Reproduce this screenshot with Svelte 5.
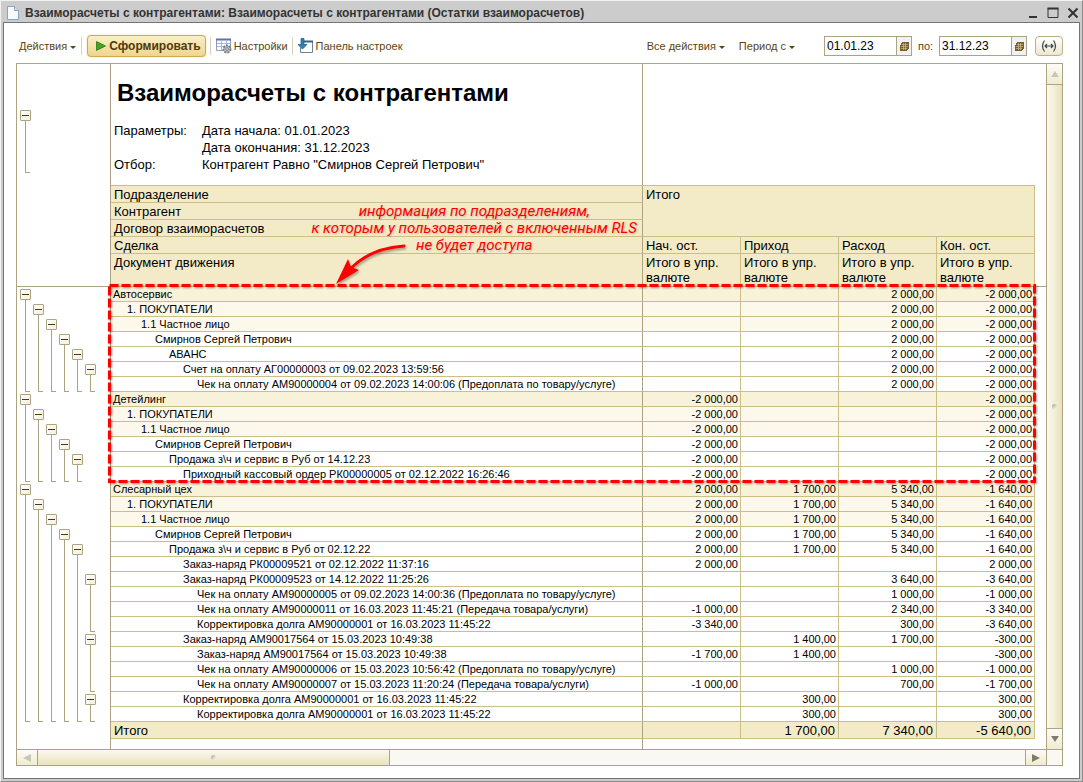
<script lang="ts">
  interface Row {
    readonly level: number;
    readonly title: string;
    readonly sums: readonly string[];
  }

  const row = (level: number, title: string, ...sums: string[]): Row => ({ level, title, sums });

  const advance = ["", "", "2 000,00", "-2 000,00"];
  const debt = ["-2 000,00", "", "", "-2 000,00"];
  const shop = ["2 000,00", "1 700,00", "5 340,00", "-1 640,00"];

  const rows: Row[] = [
    row(0, "Автосервис", ...advance),
    row(1, "1. ПОКУПАТЕЛИ", ...advance),
    row(2, "1.1 Частное лицо", ...advance),
    row(3, "Смирнов Сергей Петрович", ...advance),
    row(4, "АВАНС", ...advance),
    row(5, "Счет на оплату АГ00000003 от 09.02.2023 13:59:56", ...advance),
    row(6, "Чек на оплату АМ90000004 от 09.02.2023 14:00:06 (Предоплата по товару/услуге)", ...advance),
    row(0, "Детейлинг", ...debt),
    row(1, "1. ПОКУПАТЕЛИ", ...debt),
    row(2, "1.1 Частное лицо", ...debt),
    row(3, "Смирнов Сергей Петрович", ...debt),
    row(4, "Продажа з\\ч и сервис в Руб от 14.12.23", ...debt),
    row(5, "Приходный кассовый ордер РК00000005 от 02.12.2022 16:26:46", ...debt),
    row(0, "Слесарный цех", ...shop),
    row(1, "1. ПОКУПАТЕЛИ", ...shop),
    row(2, "1.1 Частное лицо", ...shop),
    row(3, "Смирнов Сергей Петрович", ...shop),
    row(4, "Продажа з\\ч и сервис в Руб от 02.12.22", ...shop),
    row(5, "Заказ-наряд РК00009521 от 02.12.2022 11:37:16", "2 000,00", "", "", "2 000,00"),
    row(5, "Заказ-наряд РК00009523 от 14.12.2022 11:25:26", "", "", "3 640,00", "-3 640,00"),
    row(6, "Чек на оплату АМ90000005 от 09.02.2023 14:00:36 (Предоплата по товару/услуге)", "", "", "1 000,00", "-1 000,00"),
    row(6, "Чек на оплату АМ90000011 от 16.03.2023 11:45:21 (Передача товара/услуги)", "-1 000,00", "", "2 340,00", "-3 340,00"),
    row(6, "Корректировка долга АМ90000001 от 16.03.2023 11:45:22", "-3 340,00", "", "300,00", "-3 640,00"),
    row(5, "Заказ-наряд АМ90017564 от 15.03.2023 10:49:38", "", "1 400,00", "1 700,00", "-300,00"),
    row(6, "Заказ-наряд АМ90017564 от 15.03.2023 10:49:38", "-1 700,00", "1 400,00", "", "-300,00"),
    row(6, "Чек на оплату АМ90000006 от 15.03.2023 10:56:42 (Предоплата по товару/услуге)", "", "", "1 000,00", "-1 000,00"),
    row(6, "Чек на оплату АМ90000007 от 15.03.2023 11:20:24 (Передача товара/услуги)", "-1 000,00", "", "700,00", "-1 700,00"),
    row(5, "Корректировка долга АМ90000001 от 16.03.2023 11:45:22", "", "300,00", "", "300,00"),
    row(6, "Корректировка долга АМ90000001 от 16.03.2023 11:45:22", "", "300,00", "", "300,00"),
  ];

  const totals = ["", "1 700,00", "7 340,00", "-5 640,00"];
  const sumColumns = ["Нач. ост.", "Приход", "Расход", "Кон. ост."];

  // A branch runs from its own row down to the last row nested under it.
  const branches = rows.flatMap((item, start) => {
    let end = start + 1;
    while (end < rows.length && rows[end].level > item.level) {
      end += 1;
    }
    return end > start + 1 ? [{ level: item.level, start, end, title: item.title }] : [];
  });

  let dateFrom = $state("01.01.23");
  let dateTo = $state("31.12.23");
</script>

{#snippet calendar()}
  <svg width="9" height="9" viewBox="0 0 9 9" aria-hidden="true">
    <path d="M2 0h7v7H8v1H7v1H0V3h1V1h1z" fill="#7a6030" />
    <path d="M2 2.500h6M1 4.500h7M1 6.500h6M3.500 1v7M5.500 1v7" stroke="#d9c999" stroke-width=".6" />
  </svg>
{/snippet}

<div class="window">
  <header class="titlebar">
    <svg width="12" height="14" viewBox="0 0 12 14" aria-hidden="true">
      <path d="M.5.500h7l4 4v9H.5z" fill="#f7fbff" stroke="#8ba3bd" />
      <path d="M7.500.500v4h4" fill="#d4e2f0" stroke="#8ba3bd" />
    </svg>
    <h1>Взаиморасчеты с контрагентами: Взаиморасчеты с контрагентами (Остатки взаиморасчетов)</h1>
    <div class="window-buttons">
      <button type="button" aria-label="Свернуть">
        <svg width="12" height="12" viewBox="0 0 12 12"><path d="M2 10h8" stroke="#333" stroke-width="2" /></svg>
      </button>
      <button type="button" aria-label="Развернуть">
        <svg width="12" height="12" viewBox="0 0 12 12"><path d="M1 1.500h10v9H1z" fill="none" stroke="#333" /><path d="M.5 1.500h11" stroke="#333" stroke-width="2" /></svg>
      </button>
      <button type="button" aria-label="Закрыть">
        <svg width="12" height="12" viewBox="0 0 12 12"><path d="M1.500 1.500l9 9M10.500 1.500l-9 9" stroke="#333" stroke-width="2" /></svg>
      </button>
    </div>
  </header>

  <main class="content">
    <div class="toolbar">
      <button type="button" class="command">Действия <i class="caret"></i></button>
      <span class="divider"></span>
      <button type="button" class="primary">
        <svg width="10" height="10" viewBox="0 0 10 10" aria-hidden="true"><path d="M.5.500L9.500 5l-9 4.500z" fill="#3fa51f" stroke="#2b7a17" stroke-width=".8" /></svg>
        Сформировать
      </button>
      <span class="divider"></span>
      <button type="button" class="command">
        <svg width="16" height="16" viewBox="0 0 16 16" aria-hidden="true">
          <path d="M.5 1.500h14v11H.5z" fill="#fff" stroke="#8aa0c0" />
          <path d="M0 1.500h15" stroke="#5877a5" stroke-width="2" />
          <path d="M1 5.500h13M1 8.500h13M5.500 2v10M10.500 2v10" stroke="#a9bad2" />
          <circle cx="11" cy="11" r="3.500" fill="#c4c4c8" stroke="#777b84" stroke-width="2" stroke-dasharray="2 1" />
          <circle cx="11" cy="11" r="1.300" fill="#fff" stroke="#777b84" />
        </svg>
        Настройки
      </button>
      <span class="divider"></span>
      <button type="button" class="command">
        <svg width="16" height="16" viewBox="0 0 16 16" aria-hidden="true">
          <path d="M4.500 3.500h10v11h-12v-5" fill="#fff" stroke="#6c819b" />
          <path d="M3 3.500h12" stroke="#3b5f88" stroke-width="2" />
          <path d="M3 .5h3v6h3L4.500 11 0 6.500h3z" fill="#2f81b5" stroke="#19577f" stroke-width=".7" />
        </svg>
        Панель настроек
      </button>

      <div class="period">
        <button type="button" class="command">Все действия <i class="caret"></i></button>
        <button type="button" class="command">Период с <i class="caret"></i></button>
        <div class="date-field">
          <input type="text" aria-label="Период с" bind:value={dateFrom} />
          <button type="button" aria-label="Выбрать дату начала">{@render calendar()}</button>
        </div>
        <label for="date-to">по:</label>
        <div class="date-field">
          <input id="date-to" type="text" bind:value={dateTo} />
          <button type="button" aria-label="Выбрать дату окончания">{@render calendar()}</button>
        </div>
        <button type="button" class="range" aria-label="Выбрать период">
          <svg width="16" height="12" viewBox="0 0 16 12" fill="none" stroke="#3d4650">
            <path d="M3.500.500Q-.5 6 3.500 11.500M12.500.500Q16.500 6 12.500 11.500M4 6h8M6 4L4 6l2 2M10 4l2 2-2 2" stroke-width="1.200" />
          </svg>
        </button>
      </div>
    </div>

    <div class="sheet">
      <div class="gutter">
        <div class="gutter-head">
          <div class="branch">
            <button type="button" class="toggle" aria-label="Свернуть параметры"></button>
          </div>
        </div>
        <div class="tree">
          {#each branches as branch}
            <div class="branch" style:grid-column={branch.level + 1} style:grid-row="{branch.start + 1} / {branch.end + 1}">
              <button type="button" class="toggle" aria-label={`Свернуть: ${branch.title}`}></button>
            </div>
          {/each}
        </div>
      </div>

      <div class="report">
        <div class="intro">
          <h2>Взаиморасчеты с контрагентами</h2>
          <dl>
            <dt>Параметры:</dt>
            <dd>Дата начала: 01.01.2023</dd>
            <dd>Дата окончания: 31.12.2023</dd>
            <dt>Отбор:</dt>
            <dd>Контрагент Равно "Смирнов Сергей Петрович"</dd>
          </dl>
        </div>

        <div class="table-area">
          <table>
            <colgroup>
              <col />
              {#each sumColumns as _}
                <col class="sum" />
              {/each}
            </colgroup>
            <thead>
              <tr><th>Подразделение</th><th colspan="4" rowspan="3">Итого</th></tr>
              <tr><th>Контрагент</th></tr>
              <tr><th>Договор взаиморасчетов</th></tr>
              <tr>
                <th>Сделка</th>
                {#each sumColumns as column}
                  <th>{column}</th>
                {/each}
              </tr>
              <tr class="tall">
                <th>Документ движения</th>
                {#each sumColumns as _}
                  <th>Итого в упр. валюте</th>
                {/each}
              </tr>
            </thead>
            <tbody>
              {#each rows as item}
                <tr class="level-{item.level}">
                  <td>{item.title}</td>
                  {#each item.sums as sum}
                    <td>{sum}</td>
                  {/each}
                </tr>
              {/each}
            </tbody>
            <tfoot>
              <tr>
                <td>Итого</td>
                {#each totals as total}
                  <td>{total}</td>
                {/each}
              </tr>
            </tfoot>
          </table>
          <div class="freeze-line"></div>

          <svg class="highlight" aria-hidden="true">
            <rect x=".5" y=".5" width="100%" height="100%" />
          </svg>
          <p class="note">
            информация по подразделениям,<br />к которым у пользователей с включенным RLS<br />не будет доступа
          </p>
          <svg class="arrow" width="72" height="44" viewBox="0 0 72 44" aria-hidden="true">
            <path d="M69 3Q36 5 15 26" fill="none" stroke="#fe0000" stroke-width="3" stroke-linecap="round" />
            <path d="M1 41L13 16l3 8 8 3z" fill="#fe0000" />
          </svg>
        </div>
        <div class="report-rest"></div>
      </div>

      <div class="scroll vertical">
        <button type="button" aria-label="Вверх" disabled>
          <svg width="8" height="8" viewBox="0 0 8 8"><path d="M0 7l4-6 4 6z" /></svg>
        </button>
        <div class="thumb"><i></i></div>
        <button type="button" aria-label="Вниз">
          <svg width="8" height="8" viewBox="0 0 8 8"><path d="M0 1l4 6 4-6z" /></svg>
        </button>
      </div>
      <div class="scroll horizontal">
        <button type="button" aria-label="Влево" disabled>
          <svg width="8" height="8" viewBox="0 0 8 8"><path d="M8 0L0 4l8 4z" /></svg>
        </button>
        <div class="thumb"><i></i></div>
        <div class="track"></div>
        <button type="button" aria-label="Вправо">
          <svg width="8" height="8" viewBox="0 0 8 8"><path d="M0 0l8 4-8 4z" /></svg>
        </button>
      </div>
      <div class="corner"></div>
    </div>
  </main>
</div>

<style>
  :global(body) {
    margin: 0;
    background: #fff;
  }

  .window {
    --frame: #aca480;
    --line: #cbbf85;
    --head: #f3ebc8;
    box-sizing: border-box;
    display: flex;
    flex-direction: column;
    min-height: 100vh;
    padding: 0 2px 2px 2px;
    border: 1px solid #8c8c8c;
    border-top-color: #f2f2f2;
    border-left-color: #f2f2f2;
    background: #ccc;
    font-family: "Liberation Sans", Arial, sans-serif;
    font-size: 11px;
    color: #000;
  }

  h1,
  h2,
  dl,
  dd,
  p {
    margin: 0;
  }

  button,
  input {
    box-sizing: border-box;
    margin: 0;
    padding: 0;
    border: 0;
    background: none;
    font: inherit;
    color: inherit;
  }

  svg {
    flex: none;
  }

  .titlebar {
    display: flex;
    align-items: center;
    gap: 6px;
    height: 21px;
    padding: 2px 1px 0 4px;
    box-sizing: border-box;
  }

  h1 {
    flex: 1;
    font-size: 12px;
    line-height: 18px;
    color: #333;
    white-space: nowrap;
  }

  .window-buttons {
    display: flex;
    gap: 8px;
  }

  .window-buttons button {
    display: flex;
  }

  .content {
    flex: 1;
    display: flex;
    flex-direction: column;
    padding: 0 16px 12px 12px;
    border: 1px solid #747474;
    background: #fff;
  }

  .toolbar {
    display: flex;
    align-items: center;
    gap: 3px;
    height: 40px;
    padding: 6px 0 0 3px;
    box-sizing: border-box;
    color: #5a4412;
    white-space: nowrap;
  }

  .command {
    display: flex;
    align-items: center;
    gap: 2px;
    line-height: 16px;
  }

  .caret {
    margin: 2px 1px 0;
    border: 3px solid transparent;
    border-top-color: #5a4412;
    border-bottom: 0;
  }

  .divider {
    width: 1px;
    height: 18px;
    margin: 0 2px 0 1px;
    background: #d9d3b9;
  }

  .primary {
    display: flex;
    align-items: center;
    gap: 3px;
    height: 22px;
    padding: 0 4px 0 8px;
    border: 1px solid #d0a850;
    border-radius: 4px;
    background: linear-gradient(#fbefc9, #efd58d);
    box-shadow: 0 0 1px #c9a040;
    font-size: 12px;
    font-weight: 700;
    color: #4f3a08;
  }

  .period {
    display: flex;
    align-items: center;
    margin-left: auto;
  }

  .period .command {
    margin-right: 13px;
  }

  .period label {
    width: 27px;
    text-align: center;
  }

  .date-field {
    display: flex;
    width: 88px;
    height: 20px;
    box-sizing: border-box;
    border: 1px solid var(--frame);
    background: #fff;
  }

  .command + .date-field {
    margin-left: 15px;
  }

  .date-field input {
    flex: 1;
    min-width: 0;
    padding-left: 2px;
    font-size: 12px;
    color: #000;
  }

  .date-field button {
    display: flex;
    align-items: center;
    justify-content: center;
    width: 15px;
    border-left: 1px solid var(--frame);
    background: #f1f1f1;
  }

  .range {
    display: flex;
    align-items: center;
    justify-content: center;
    width: 28px;
    height: 20px;
    margin-left: 8px;
    border: 1px solid #b9b18b;
    border-radius: 4px;
    background: linear-gradient(#fff, #ece7cd);
  }

  .sheet {
    flex: 1;
    display: grid;
    grid-template-columns: 94px 1fr 16px;
    grid-template-rows: 1fr 16px;
    border: 1px solid var(--frame);
  }

  .gutter {
    border-right: 1px solid var(--frame);
  }

  .gutter-head {
    box-sizing: border-box;
    height: 223px;
    padding: 44px 0 0 2px;
    border-bottom: 1px solid var(--frame);
  }

  .gutter-head .branch {
    width: 13px;
    height: 63px;
  }

  .tree {
    display: grid;
    grid-template-columns: repeat(6, 13px);
    grid-auto-rows: 15px;
    padding-left: 2px;
  }

  .branch {
    display: flex;
    flex-direction: column;
    padding: 2px 0 0 1px;
  }

  /* Stem and foot that hang under the toggle */
  .branch::after {
    content: "";
    flex: 1;
    width: 4px;
    margin-left: 5px;
    border: solid var(--frame);
    border-width: 0 0 1px 1px;
  }

  .tree .branch {
    min-height: 0;
  }

  .toggle {
    flex: none;
    display: flex;
    align-items: center;
    justify-content: center;
    width: 11px;
    height: 11px;
    border: 1px solid var(--frame);
    border-radius: 1px;
    background: linear-gradient(135deg, #fff, #f3efdc);
  }

  .toggle::before {
    content: "";
    width: 7px;
    height: 1px;
    background: #4a3a10;
  }

  .report {
    display: flex;
    flex-direction: column;
    min-width: 0;
  }

  .intro {
    box-sizing: border-box;
    height: 121px;
    margin-right: 403px;
    padding: 14px 0 0 3px;
    border-right: 1px solid var(--frame);
  }

  h2 {
    padding-left: 3px;
    font-size: 24px;
    line-height: 30px;
  }

  dl {
    display: grid;
    grid-template-columns: 88px 1fr;
    margin-top: 14px;
    font-size: 13px;
    line-height: 17px;
  }

  dd {
    grid-column: 2;
  }

  .table-area {
    position: relative;
    display: grid;
    grid-template-columns: 1fr 11px;
  }

  .freeze-line {
    height: 101px;
    border-bottom: 1px solid var(--frame);
  }

  table {
    width: 100%;
    border-top: 1px solid var(--line);
    border-spacing: 0;
    table-layout: fixed;
  }

  .sum {
    width: 98px;
  }

  th,
  td {
    box-sizing: border-box;
    padding: 0 2px;
    border: solid var(--line);
    border-width: 0 1px 1px 0;
    white-space: nowrap;
  }

  tr > :first-child {
    border-right-color: var(--frame);
  }

  th {
    height: 17px;
    padding: 1px 3px 0;
    background: var(--head);
    font-size: 13px;
    font-weight: 400;
    line-height: 15px;
    text-align: left;
    vertical-align: top;
    white-space: normal;
  }

  .tall th {
    height: 33px;
  }

  tbody td {
    height: 15px;
    font-size: 11px;
    line-height: 14px;
  }

  td:not(:first-child) {
    text-align: right;
  }

  .level-0 td {
    background: #f8f2d9;
  }

  .level-1 td,
  .level-2 td {
    background: #fcf9ec;
  }

  .level-1 td:first-child {
    padding-left: 16px;
  }

  .level-2 td:first-child {
    padding-left: 30px;
  }

  .level-3 td:first-child {
    padding-left: 44px;
  }

  .level-4 td:first-child {
    padding-left: 58px;
  }

  .level-5 td:first-child {
    padding-left: 72px;
  }

  .level-6 td:first-child {
    padding-left: 86px;
  }

  tfoot td {
    height: 17px;
    padding: 1px 3px 0;
    background: var(--head);
    font-size: 13px;
    line-height: 15px;
  }

  .report-rest {
    flex: 1;
    min-height: 10px;
    margin-right: 403px;
    border-right: 1px solid var(--frame);
  }

  .highlight {
    position: absolute;
    top: 100px;
    left: -2px;
    width: calc(100% - 10px);
    height: 196px;
    overflow: visible;
    filter: drop-shadow(1px 1px 1px #0006);
  }

  .highlight rect {
    fill: none;
    stroke: #fe0000;
    stroke-width: 3;
    stroke-dasharray: 9 3;
  }

  .note {
    position: absolute;
    top: 18px;
    right: 409px;
    color: #fe0000;
    font: italic 400 15px/17px Roboto, sans-serif;
    text-align: center;
    text-shadow: 1px 1px 2px #0003;
  }

  .arrow {
    position: absolute;
    top: 58px;
    right: 639px;
    filter: drop-shadow(1px 2px 1px #0005);
  }

  .scroll {
    display: flex;
    background: #f9f8f3;
  }

  .scroll button {
    display: flex;
    align-items: center;
    justify-content: center;
    flex: none;
    background: linear-gradient(#fdfcf6, #f0ebd2);
    fill: #807d70;
  }

  .scroll button:disabled {
    fill: #c9c6b8;
  }

  .thumb {
    display: flex;
    align-items: center;
    justify-content: center;
  }

  .thumb i {
    width: 5px;
    height: 5px;
    border-radius: 3px;
    background: linear-gradient(135deg, #a8a284, #fff);
  }

  .vertical {
    flex-direction: column;
    border-left: 1px solid var(--frame);
  }

  .vertical button {
    height: 20px;
  }

  .vertical .thumb {
    flex: 1;
    border: solid var(--frame);
    border-width: 1px 0;
    background: linear-gradient(90deg, #fbf9ef, #e9e2bd);
  }

  .horizontal {
    grid-column: 1 / 3;
    border-top: 1px solid var(--frame);
  }

  .horizontal button {
    width: 20px;
  }

  .horizontal .thumb {
    flex: 351;
    border: solid var(--frame);
    border-width: 0 1px;
    background: linear-gradient(#fbf9ef, #e9e2bd);
  }

  .horizontal .track {
    flex: 635;
    border-right: 1px solid var(--frame);
  }

  .corner {
    border: solid var(--frame);
    border-width: 1px 0 0 1px;
    background: #f9f8f3;
  }
</style>
